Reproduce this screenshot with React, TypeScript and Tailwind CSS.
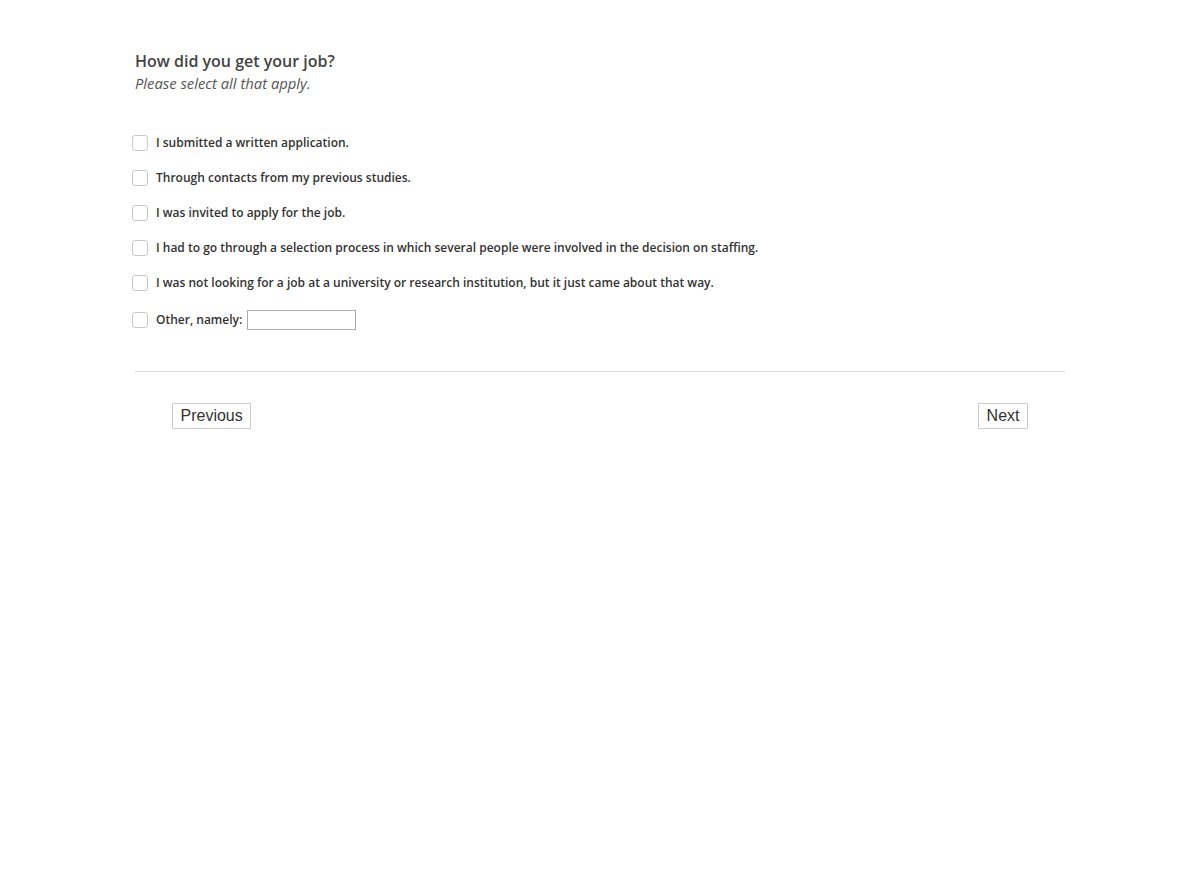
import React from "react";

const options = [
  "I submitted a written application.",
  "Through contacts from my previous studies.",
  "I was invited to apply for the job.",
  "I had to go through a selection process in which several people were involved in the decision on staffing.",
  "I was not looking for a job at a university or research institution, but it just came about that way.",
];

function Box() {
  return (
    <span className="inline-block w-4 h-4 border border-[#c8c8c8] rounded-[3px] bg-white shrink-0" />
  );
}

export default function App() {
  return (
    <div className="min-h-screen bg-white font-['Open_Sans',sans-serif] text-[#333]">
      <div className="max-w-[930px] mx-auto pt-[50px]">
        <h1 className="text-[16px] leading-[22px] font-semibold text-[#444]">
          How did you get your job?
        </h1>
        <p className="text-[14.8px] leading-[23px] italic text-[#555]">
          Please select all that apply.
        </p>

        <div className="mt-[30px] flex flex-col">
          {options.map((o) => (
            <label key={o} className="flex items-center gap-[8px] h-[35px] -ml-[3px] text-[12px] font-semibold">
              <Box />
              <span>{o}</span>
            </label>
          ))}
          <label className="flex items-center gap-[8px] h-[40px] -ml-[3px] text-[12px] font-semibold">
            <Box />
            <span>Other, namely:</span>
            <input
              type="text"
              className="-ml-[3px] w-[109px] h-[20px] border border-[#a9a9a9] bg-white"
            />
          </label>
        </div>

        <div className="mt-[31px] border-t border-[#dcdcdc]" />

        <div className="flex justify-between px-[37px] pt-[31px] font-['Liberation_Sans',sans-serif]">
          <button
            type="button"
            className="h-[26px] px-[7.5px] border border-[#ccc] bg-white text-[16px] text-[#333]"
          >
            Previous
          </button>
          <button
            type="button"
            className="h-[26px] px-[7.5px] border border-[#ccc] bg-white text-[16px] text-[#333]"
          >
            Next
          </button>
        </div>
      </div>
    </div>
  );
}
